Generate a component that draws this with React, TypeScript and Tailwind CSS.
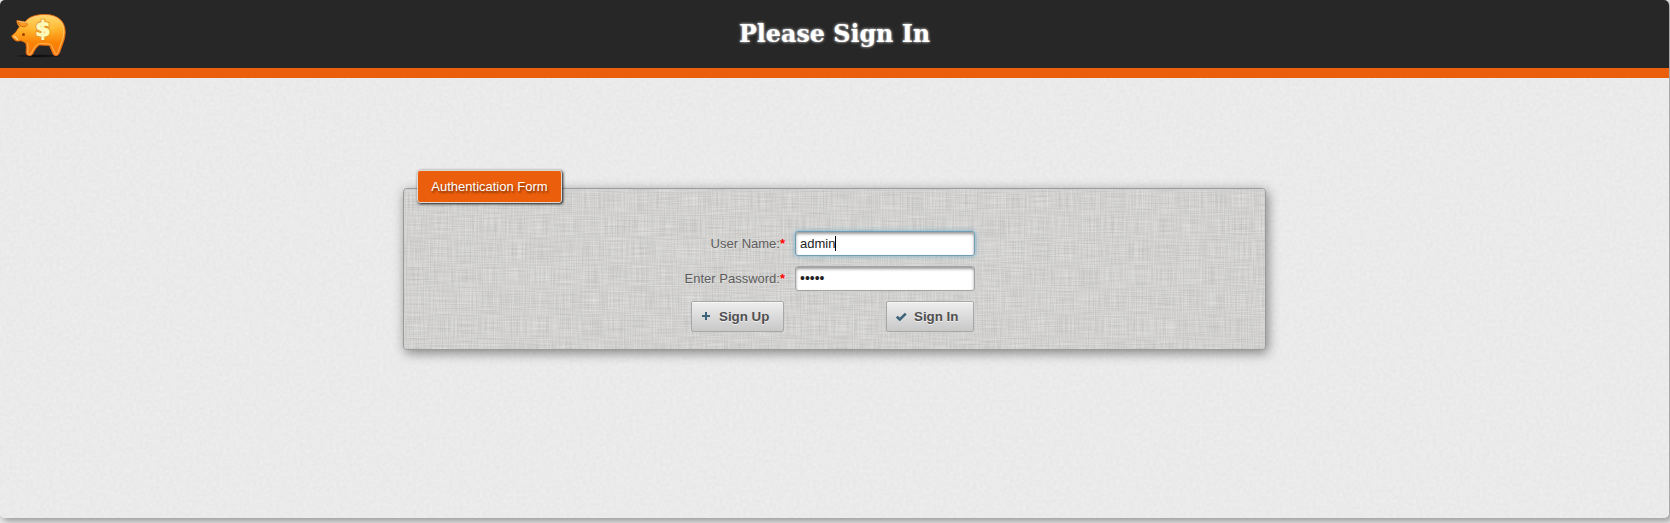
import React from "react";

function PiggyLogo() {
  return (
    <svg className="ml-[9px] mt-[10px] block" width="60" height="50" viewBox="0 0 60 50">
      <defs>
        <linearGradient id="pig" x1="0" y1="0" x2="0" y2="1">
          <stop offset="0" stopColor="#ffdc75" />
          <stop offset="0.35" stopColor="#ffb52d" />
          <stop offset="0.7" stopColor="#fb8205" />
          <stop offset="1" stopColor="#f47a15" />
        </linearGradient>
        <radialGradient id="glow" cx="0.5" cy="0.5" r="0.5">
          <stop offset="0" stopColor="#ffe98a" stopOpacity="0.5" />
          <stop offset="1" stopColor="#ffc13d" stopOpacity="0" />
        </radialGradient>
        <radialGradient id="ground" cx="0.5" cy="0.5" r="0.5">
          <stop offset="0" stopColor="#000" stopOpacity="0.9" />
          <stop offset="1" stopColor="#000" stopOpacity="0" />
        </radialGradient>
      </defs>
      <ellipse cx="30" cy="46" rx="26" ry="1.8" fill="url(#ground)" />
      <path
        d="M8 10.3C10.5 11.5 13.5 11.1 16 12C20 6.5 27 4.5 36 4.5C49 4.5 56.2 11.5 56.2 22C56.2 29 53.5 34 51.5 40C50.5 43.5 49.5 45.6 47 45.6C44.8 45.6 44 44.5 43.2 42L40.5 35.5L30.5 35C27.5 37 25.5 40 24 43.5C23 45.5 21 45.8 19.5 45.4C17.5 45 17 43.5 17.2 41.5C17.5 38.5 17.5 36 17 33.5C14.5 31.5 13.5 31 11.5 30.7C8.5 31.5 6.5 31 5.2 29.5C3.5 28 2.4 26.5 3 25.5C3.6 24.5 6.2 23.5 7.2 21.5C8.5 19.5 9.5 18 10.5 16.7C8.8 15 7.5 12.5 8 10.3Z"
        fill="url(#pig)" stroke="#e96b10" strokeWidth="0.9"
      />
      <path d="M17.5 12.7C21.5 7.3 28 5.8 36 5.8C48 5.8 54.8 12 54.8 22C54.8 29 51.5 34 50 39.5C49.2 43.5 48 44.6 46.3 43.8C44.5 40.5 43.3 36.3 41.6 34.2C36 33.4 31 33.5 28.5 34.2C25 37 23.7 41 22 44C20.5 44.6 18.7 44.5 18.7 42.5C19.2 38 19 35 18.3 32.8" fill="none" stroke="#ffc978" strokeWidth="0.9" opacity="0.85" />
      <path d="M9 11.5C11.5 13 15.5 12 18 13.3C19.2 15 17 17 14 16.8C11.5 16.5 9.5 14 9 11.5Z" fill="#ff9d22" stroke="#c95c08" strokeWidth="0.9" />
      <path d="M9.2 11.3C12 12.4 15 11.8 17.5 13" fill="none" stroke="#ffe09a" strokeWidth="0.9" />
      <path d="M4.5 26.2C6.5 26.5 7.5 28 9 30" fill="none" stroke="#ffd08a" strokeWidth="1.4" />
      <circle cx="14.5" cy="24.5" r="1.5" fill="#9c3f00" />
      <ellipse cx="34" cy="17" rx="16" ry="12" fill="url(#glow)" />
      <text x="34" y="26.2" textAnchor="middle" fontFamily="DejaVu Sans, sans-serif" fontWeight="bold" fontSize="22" fill="#e08a20" stroke="#e08a20" strokeWidth="2.6">$</text>
      <text x="34" y="26.2" textAnchor="middle" fontFamily="DejaVu Sans, sans-serif" fontWeight="bold" fontSize="22" fill="#fff9b8" stroke="#fff9b8" strokeWidth="1">$</text>
    </svg>
  );
}

function PaperTexture() {
  return (
    <svg className="pointer-events-none absolute inset-0 h-full w-full" aria-hidden="true">
      <filter id="paper" x="0" y="0" width="100%" height="100%" colorInterpolationFilters="sRGB">
        <feTurbulence type="fractalNoise" baseFrequency="0.3" numOctaves="2" seed="4" />
        <feColorMatrix values="0.04 0 0 0 0.899  0.04 0 0 0 0.899  0.04 0 0 0 0.899  0 0 0 0 1" />
      </filter>
      <rect width="100%" height="100%" filter="url(#paper)" />
    </svg>
  );
}

function LinenTexture() {
  return (
    <svg className="pointer-events-none absolute inset-0 h-full w-full rounded-[3px]" aria-hidden="true">
      <filter id="linen" x="0" y="0" width="100%" height="100%" colorInterpolationFilters="sRGB">
        <feTurbulence type="fractalNoise" baseFrequency="0.04 0.83" numOctaves="1" seed="7" result="h" />
        <feColorMatrix in="h" values="0.26 0 0 0 0.69  0.26 0 0 0 0.688  0.26 0 0 0 0.682  0 0 0 0 1" result="hg" />
        <feTurbulence type="fractalNoise" baseFrequency="0.83 0.04" numOctaves="1" seed="12" result="v" />
        <feColorMatrix in="v" values="0.26 0 0 0 0.69  0.26 0 0 0 0.688  0.26 0 0 0 0.682  0 0 0 0 1" result="vg" />
        <feComposite in="hg" in2="vg" operator="arithmetic" k2="0.5" k3="0.5" />
      </filter>
      <rect width="100%" height="100%" filter="url(#linen)" />
    </svg>
  );
}

const fieldBase =
  "h-[25px] w-[180px] rounded-[3px] border bg-white pl-1 font-['Liberation_Sans',Arial,sans-serif] text-[13px] text-[#222222] outline-none flex items-center";

const buttonBase =
  "flex h-[31px] items-center rounded-[2px] border border-[#a8a8a8] bg-linear-to-b from-[#eeeeee] to-[#c8c8c8] text-[13.33px] font-bold text-[#4f4f4f] shadow-[inset_0_1px_0_#f8f8f8] [text-shadow:0_1px_0_rgba(255,255,255,0.7)]";

function Label({ children }: { children: React.ReactNode }) {
  return (
    <label className="w-[381px] text-right text-[13px] text-[#5c5c5c] [text-shadow:0_1px_0_rgba(255,255,255,0.3)]">
      {children}
      <span className="font-bold text-[#ff0000]">*</span>
    </label>
  );
}

export default function App() {
  return (
    <div className="h-[523px] w-full overflow-hidden bg-[#e6e6e6] font-['Liberation_Sans',Arial,sans-serif]">
      <div className="relative h-[518px] w-[1669px] rounded-[5px] bg-[#eaeaea] shadow-[3px_3px_6px_#999999]">
        <div className="absolute inset-0 overflow-hidden rounded-[5px]">
          <PaperTexture />
        </div>
        <header className="relative flex h-[78px] rounded-t-[5px] border-b-10 border-[#eb5e0b] bg-[#272727]">
          <div className="w-[200px]">
            <PiggyLogo />
          </div>
          <h1 className="mt-[16px] flex-1 pr-[200px] text-center font-['DejaVu_Serif',serif] text-[23.8px] leading-9 font-bold text-white [text-shadow:0_0_3px_#ffffff]">
            Please Sign In
          </h1>
        </header>

        <main className="relative ml-[403px] mt-[110px] h-[162px] w-[863px] rounded-[4px] border border-[#9b9b9b] bg-[#d0d0ce] shadow-[2px_3px_12px_rgba(0,0,0,0.45)]">
          <LinenTexture />
          <div className="relative">
            <div className="-mt-[19px] ml-[13px] flex h-[33px] w-[145px] items-center justify-center rounded-[3px] border border-[#ddd9d4] bg-[#eb5e0b] pt-px text-[13px] text-white shadow-[1px_1px_3px_#111111] [text-shadow:1px_2px_2px_rgba(0,0,0,0.5)]">
              Authentication Form
            </div>
            <form className="mt-[28px] flex flex-col gap-[10px]">
              <div className="flex items-center">
                <Label>User Name:</Label>
                <div className={`${fieldBase} ml-[10px] border-[#6f9db5] shadow-[inset_0_2px_3px_#999999,0_0_5px_#79afc9]`}>
                  admin
                  <span className="h-[15px] w-px bg-black" />
                </div>
              </div>
              <div className="flex items-center">
                <Label>Enter Password:</Label>
                <div className={`${fieldBase} ml-[10px] border-[#a4a4a4] shadow-[inset_0_2px_3px_#999999]`}>
                  <span className="text-[14px]">•••••</span>
                </div>
              </div>
              <div className="ml-[287px] flex w-[283px] justify-between">
                <button type="button" className={`${buttonBase} w-[93px] pl-[10px]`}>
                  <svg width="9" height="9" viewBox="0 0 9 9" className="mr-[8px]">
                    <path d="M3 0h2v3h3v2h-3v3h-2v-3h-3v-2h3z" fill="#3c6379" />
                  </svg>
                  Sign Up
                </button>
                <button type="button" className={`${buttonBase} w-[88px] pl-[9px]`}>
                  <svg width="11" height="10" viewBox="0 0 11 10" className="mr-[7px]">
                    <path d="M0.8 4.7L3.8 7.5L9.8 1.6" fill="none" stroke="#3c6379" strokeWidth="2.5" />
                  </svg>
                  Sign In
                </button>
              </div>
            </form>
          </div>
        </main>
      </div>
    </div>
  );
}
